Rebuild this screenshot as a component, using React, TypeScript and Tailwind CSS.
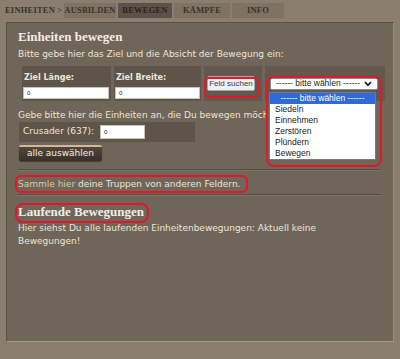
import React from "react";

const tabs = [
  { t: "AUSBILDEN", w: "w-[52px]", active: false },
  { t: "BEWEGEN", w: "w-[54px]", active: true },
  { t: "KÄMPFE", w: "w-[56px]", active: false },
  { t: "INFO", w: "w-[52px]", active: false },
];

function Chevron() {
  return (
    <svg width="8" height="6" viewBox="0 0 8 6" className="shrink-0">
      <path d="M1 1.2 L4 4.2 L7 1.2" fill="none" stroke="#222" strokeWidth="1.8" />
    </svg>
  );
}

export default function App() {
  return (
    <div className="relative w-[400px] h-[359px] overflow-hidden bg-[#8a7e70] font-['DejaVu_Sans',sans-serif] text-[#ece6da]">
      {/* tabs */}
      <div className="flex items-stretch h-[15px] mt-[3px] pl-[5px] font-['Liberation_Serif',serif] font-bold text-[8.5px] tracking-[0.2px] text-[#3b3228] whitespace-nowrap">
        <div className="flex items-center w-[59px] shrink-0">EINHEITEN &gt;</div>
        {tabs.map((tb) => (
          <div
            key={tb.t}
            className={
              tb.active
                ? `flex items-center justify-center shrink-0 ${tb.w} bg-[#5c5247] text-[#2c241c] mr-[2px]`
                : `flex items-center justify-center shrink-0 ${tb.w} bg-[#7e7264] mr-[2px]`
            }
          >
            {tb.t}
          </div>
        ))}
      </div>

      {/* panel */}
      <div className="mx-[6px] mt-[4px] h-[320px] border border-t-[#5a5045] border-l-[#5a5045] border-b-[#a69684] border-r-[#9c8d7c] bg-[#6f6558] pl-[11px] pr-[12px] pt-[6px]">
        <div className="font-['Liberation_Serif',serif] font-bold text-[13px] leading-[16px] text-[#f3eee4]">
          Einheiten bewegen
        </div>
        <div className="mt-[3px] text-[9px] leading-[12px]">
          Bitte gebe hier das Ziel und die Absicht der Bewegung ein:
        </div>

        {/* form row */}
        <div className="relative mt-[6px] ml-[4px] w-[363px] h-[35px] flex gap-[3px]">
          <div className="w-[89px] bg-[#5e5449] px-[1px] pt-[6px]">
            <div className="pl-[1px] text-[8px] font-bold leading-[12px]">Ziel Länge:</div>
            <div className="mt-[3px] w-[86px] h-[12px] bg-white border border-[#c9c2b8] text-[6px] leading-[10px] text-[#222] pl-[3px] font-['Liberation_Sans',sans-serif]">0</div>
          </div>
          <div className="w-[87px] bg-[#5e5449] px-[1px] pt-[6px]">
            <div className="pl-[1px] text-[8px] font-bold leading-[12px]">Ziel Breite:</div>
            <div className="mt-[3px] w-[85px] h-[12px] bg-white border border-[#c9c2b8] text-[6px] leading-[10px] text-[#222] pl-[3px] font-['Liberation_Sans',sans-serif]">0</div>
          </div>
          <div className="w-[58px] bg-[#62584c] flex items-center pl-[3px]">
            <div className="w-[48px] h-[15px] bg-[#efefef] border border-[#a7a7a7] rounded-[2px] flex items-center justify-center font-['Liberation_Sans',sans-serif] text-[8px] text-[#353a5a]">
              Feld suchen
            </div>
          </div>
          <div className="relative flex-1 bg-[#62584c] flex items-center pl-[5px]">
            <div className="w-[108px] h-[12px] bg-white border border-[#8a8a8a] rounded-[2px] flex items-center justify-center gap-[4px] font-['Liberation_Sans',sans-serif] text-[8.5px] text-[#222]">
              <span>------ bitte wählen ------</span>
              <Chevron />
            </div>
            {/* open list */}
            <div className="absolute left-[4px] top-[26px] w-[107px] h-[68px] bg-white border border-[#7a7a7a] font-['Liberation_Sans',sans-serif] text-[8.5px] text-[#222] z-10">
              <div className="h-[11px] leading-[11px] bg-[#2f6ad8] text-white text-center">------ bitte wählen ------</div>
              {["Siedeln", "Einnehmen", "Zerstören", "Plündern", "Bewegen"].map((o) => (
                <div key={o} className="h-[11px] leading-[11px] pl-[5px]">{o}</div>
              ))}
            </div>
          </div>
        </div>

        <div className="mt-[8px] w-[250px] overflow-hidden text-[9px] leading-[12px] whitespace-nowrap">
          Gebe bitte hier die Einheiten an, die Du bewegen möchtest
        </div>

        <div className="mt-[1px] ml-[1px] w-[176px] h-[20px] bg-[#5e5449] flex items-center pl-[4px]">
          <span className="text-[9px]">Crusader (637):</span>
          <div className="ml-[6px] w-[45px] h-[14px] bg-white border border-[#c9c2b8] text-[6px] leading-[12px] text-[#222] pl-[3px] font-['Liberation_Sans',sans-serif]">0</div>
        </div>

        <div className="mt-[3px] ml-[1px] w-[83px] h-[16px] rounded-[2px] border-t-2 border-t-[#cdb99c] bg-gradient-to-b from-[#54463a] to-[#3a3027] shadow-[0_1px_1px_rgba(0,0,0,0.4)] flex items-center justify-center text-[9px] text-[#f2ede4]">
          alle auswählen
        </div>

        <div className="mt-[8px] h-[2px] border-t border-t-[#554b40] border-b border-b-[#7f7466]" />

        <div className="mt-[7px] text-[9px] leading-[12px]">
          <span className="text-[#dccb9f]">Sammle hier</span> deine Truppen von anderen Feldern.
        </div>

        <div className="mt-[4px] h-[2px] border-t border-t-[#554b40] border-b border-b-[#7f7466]" />

        <div className="mt-[8px] font-['Liberation_Serif',serif] font-bold text-[13px] leading-[16px] text-[#f3eee4]">
          Laufende Bewegungen
        </div>
        <div className="mt-[2px] text-[9px] leading-[13px] w-[300px]">
          Hier siehst Du alle laufenden Einheitenbewegungen: Aktuell keine Bewegungen!
        </div>
      </div>

      {/* red annotation outlines */}
      <div className="absolute left-[204px] top-[77px] w-[55px] h-[21px] border-2 border-[#e3162a] rounded-[5px] z-20" />
      <div className="absolute left-[266px] top-[76px] w-[116px] h-[91px] border-2 border-[#e3162a] rounded-[8px] z-20" />
      <div className="absolute left-[15px] top-[175px] w-[233px] h-[18px] border-2 border-[#e3162a] rounded-[6px] z-20" />
      <div className="absolute left-[15px] top-[203px] w-[134px] h-[20px] border-2 border-[#e3162a] rounded-[8px] z-20" />
    </div>
  );
}
